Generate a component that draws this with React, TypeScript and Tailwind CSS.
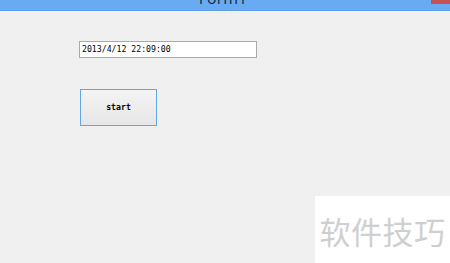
export default function App() {
  return (
    <div className="relative w-[450px] h-[263px] overflow-hidden bg-[#f0f0f0]">
      {/* title bar */}
      <div className="relative h-[11px] bg-[#68abf4] border-b border-[#5e9ee6] overflow-hidden flex justify-center">
        <span className="mt-[-12px] ml-[-4px] text-[16px] leading-[20px] text-[#1a2a3a] font-['Open_Sans',sans-serif]">
          Form1
        </span>
        <div className="absolute right-0 top-0 w-[19px] h-[4px] bg-[#c75050]" />
      </div>

      {/* form body */}
      <div className="flex flex-col items-start pl-[79px] pt-[30px]">
        <div className="w-[178px] h-[17px] bg-white border border-[#a9a9a9] flex items-center px-[2px] font-['DejaVu_Sans_Mono',monospace] text-[8.2px] text-black">
          2013/4/12 22:09:00
        </div>
        <button className="mt-[31px] ml-[1px] w-[77px] h-[37px] border border-[#5fa8e4] bg-gradient-to-b from-[#f4f4f4] to-[#e6e6e6] flex items-center justify-center font-['DejaVu_Sans_Mono',monospace] text-[8.2px] font-bold text-black">
          start
        </button>
      </div>

      {/* watermark */}
      <div className="absolute right-0 bottom-0 w-[135px] h-[67px] bg-white flex items-center justify-center pt-[2px]">
        <span className="text-[31px] leading-none tracking-[0.5px] text-[#cfcfcf] font-['Noto_Sans_CJK_SC',sans-serif]">
          软件技巧
        </span>
      </div>
    </div>
  );
}
